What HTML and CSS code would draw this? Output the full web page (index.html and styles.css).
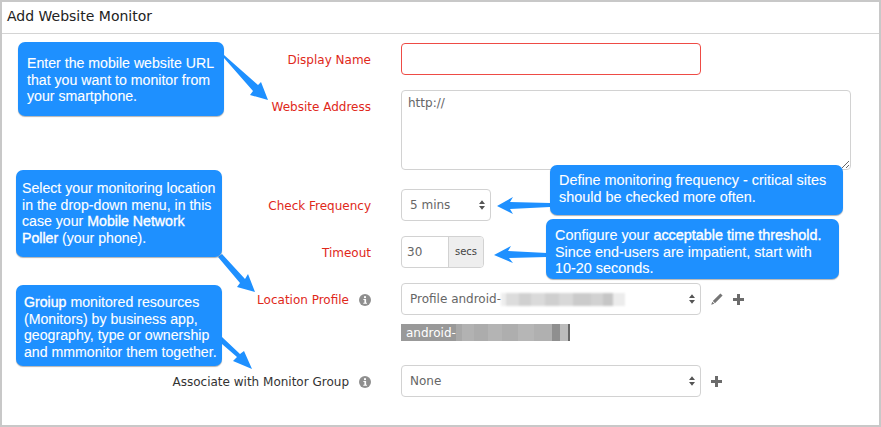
FILE: index.html
```html
<!DOCTYPE html>
<html lang="en">
<head>
<meta charset="utf-8">
<title>Add Website Monitor</title>
<link rel="stylesheet" href="styles.css">
</head>
<body>
<main class="panel">
  <header class="panel-head">Add Website Monitor</header>
  <form class="form">
    <div class="row row-name">
      <label class="label req">Display Name</label>
      <div class="field"><input class="control invalid w300" type="text"></div>
    </div>
    <div class="row row-address">
      <label class="label req">Website Address</label>
      <div class="field"><textarea class="control area">http://</textarea></div>
    </div>
    <div class="row row-freq">
      <label class="label req">Check Frequency</label>
      <div class="field">
        <div class="select w90">5 mins
          <svg class="sort" viewBox="0 0 7 11"><path d="M3.5 0 7 4.4H0zM3.5 11 0 6.6h7z"/></svg>
        </div>
      </div>
    </div>
    <div class="row row-time">
      <label class="label req">Timeout</label>
      <div class="field">
        <div class="group"><span class="group-value">30</span><span class="group-addon">secs</span></div>
      </div>
    </div>
    <div class="row row-profile">
      <label class="label req">Location Profile
        <svg class="info" viewBox="0 0 12 12"><circle cx="6" cy="6" r="6"/><rect class="info-i" x="5" y="2.2" width="2" height="1.9"/><path class="info-i" d="M4.4 5h2.7v3.7H8v1.1H4.3V8.7h1.1V6.1h-1z"/></svg>
      </label>
      <div class="field">
        <div class="select w300">Profile android-<span class="blur blur-light"></span>
          <svg class="sort" viewBox="0 0 7 11"><path d="M3.5 0 7 4.4H0zM3.5 11 0 6.6h7z"/></svg>
        </div>
        <svg class="pencil" viewBox="0 0 12 12"><path d="M9.4 0.4 11.6 2.6 4 10.2 1.8 8zM1.3 8.7 3.3 10.7 0.2 11.8z"/></svg>
        <svg class="plus" viewBox="0 0 11 11"><path d="M4 0h3v4h4v3H7v4H4V7H0V4h4z"/></svg>
      </div>
    </div>
    <div class="row row-tag">
      <span></span>
      <div class="field"><span class="tag">android-<span class="blur blur-dark"></span></span></div>
    </div>
    <div class="row row-group">
      <label class="label">Associate with Monitor Group
        <svg class="info" viewBox="0 0 12 12"><circle cx="6" cy="6" r="6"/><rect class="info-i" x="5" y="2.2" width="2" height="1.9"/><path class="info-i" d="M4.4 5h2.7v3.7H8v1.1H4.3V8.7h1.1V6.1h-1z"/></svg>
      </label>
      <div class="field">
        <div class="select w300">None
          <svg class="sort" viewBox="0 0 7 11"><path d="M3.5 0 7 4.4H0zM3.5 11 0 6.6h7z"/></svg>
        </div>
        <svg class="plus plus-near" viewBox="0 0 11 11"><path d="M4 0h3v4h4v3H7v4H4V7H0V4h4z"/></svg>
      </div>
    </div>
  </form>

  <svg class="arrows" viewBox="0 0 881 427">
    <path d="M224 55 258 85 261 82 268 100 250 95 253 91 224 58z"/>
    <path d="M218 257 222 254 245 279 248 274 255 292 237 287 240 283z"/>
    <path d="M222 337 240 354 244 351 252 369 233 361 237 357 222 344z"/>
    <path d="M550 203 510 202 513 197 497 206 513 214 510 209 550 207z"/>
    <path d="M547 253 508 251 511 246 494 255 513 263 509 258 547 257z"/>
  </svg>

  <p class="note note-url">Enter the mobile website URL<br>that you want to monitor from<br>your smartphone.</p>
  <p class="note note-location">Select your monitoring location<br>in the drop-down menu, in this<br>case your <b>Mobile Network<br>Poller</b> (your phone).</p>
  <p class="note note-group"><b>Groiup</b> monitored resources<br>(Monitors) by business app,<br>geography, type or ownership<br>and mmmonitor them together.</p>
  <p class="note note-freq">Define monitoring frequency - critical sites<br>should be checked more often.</p>
  <p class="note note-time">Configure your <b>acceptable time threshold.</b><br>Since end-users are impatient, start with<br>10-20 seconds.</p>
</main>
</body>
</html>
```
FILE: styles.css
```css
* { box-sizing: border-box; }
html, body { margin: 0; background: #fff; }
.panel {
  position: relative;
  width: 881px;
  height: 427px;
  border: 2px solid #c8c8c8;
  font-family: "DejaVu Sans", sans-serif;
  overflow: hidden;
}
.panel-head {
  height: 32px;
  padding: 5px 0 0 5px;
  font-size: 14px;
  line-height: 18px;
  color: #222;
  border-bottom: 1px solid #d4d4d4;
}
.form { padding-top: 9px; }
.row {
  display: grid;
  grid-template-columns: 369px 1fr;
  column-gap: 30px;
  align-items: start;
}
.row-address { margin-top: 15px; }
.row-freq { margin-top: 19px; }
.row-time { margin-top: 15px; }
.row-profile { margin-top: 15px; }
.row-tag { margin-top: 9px; }
.row-group { margin-top: 24px; }
.label {
  display: flex;
  justify-content: flex-end;
  align-items: center;
  gap: 10px;
  height: 32px;
  padding-top: 2px;
  font-size: 12px;
  color: #333;
}
.label.req { color: #e0281a; }
.info { width: 12px; height: 12px; fill: #8f8f8f; flex: none; }
.info-i { fill: #fff; }
.field { display: flex; align-items: center; }
.control {
  display: block;
  height: 32px;
  border: 1px solid #d2d2d2;
  border-radius: 4px;
  background: #fff;
  font: 12px "DejaVu Sans", sans-serif;
  color: #666;
  outline: none;
}
.invalid { border-color: #ee4b45; }
.w300 { width: 300px; }
.w90 { width: 90px; }
.area {
  width: 450px;
  height: 80px;
  padding: 3px 6px;
  line-height: 18px;
  resize: vertical;
}
.select {
  position: relative;
  height: 32px;
  line-height: 30px;
  padding-left: 8px;
  border: 1px solid #d2d2d2;
  border-radius: 4px;
  font-size: 12px;
  color: #666;
  background: #fff;
  white-space: nowrap;
}
.sort {
  position: absolute;
  right: 5px;
  top: 10px;
  width: 6px;
  height: 10px;
  fill: #555;
}
.group {
  display: flex;
  width: 83px;
  height: 32px;
  border: 1px solid #d2d2d2;
  border-radius: 4px;
  overflow: hidden;
  font-size: 12px;
  line-height: 30px;
  color: #666;
}
.group-value { width: 46px; padding-left: 5px; }
.group-addon {
  flex: 1;
  border-left: 1px solid #d2d2d2;
  background: #eee;
  color: #444;
  font-size: 10px;
  text-align: center;
}
.blur {
  display: inline-block;
  vertical-align: middle;
  filter: blur(1px);
}
.blur-light {
  width: 124px;
  height: 13px;
  background: linear-gradient(90deg,
    #eee 0 5px, #dcdcdc 5px 18px, #d0d0d0 18px 30px, #dadada 30px 44px, #cfcfcf 44px 58px,
    #d8d8d8 58px 72px, #cbcbcb 72px 90px, #d2d2d2 90px 102px, #c6c6c6 102px 112px, #ececec 112px);
}
.pencil { width: 12px; height: 12px; margin-left: 10px; fill: #757575; }
.plus { width: 11px; height: 11px; margin-left: 10px; fill: #6b6b6b; }
.plus-near { margin-left: 10px; }
.tag {
  display: flex;
  align-items: center;
  width: 169px;
  height: 17px;
  padding-left: 5px;
  background: #999;
  color: #fff;
  font-size: 12px;
  overflow: hidden;
}
.blur-dark {
  width: 118px;
  height: 17px;
  filter: none;
  background: linear-gradient(90deg,
    #a8a8a8 0 6px, #b2b2b2 6px 18px, #acacac 18px 32px, #b4b4b4 32px 46px, #aeaeae 46px 62px,
    #b6b6b6 62px 78px, #b0b0b0 78px 96px, #8f8f8f 96px 104px, #bbb 104px 112px, #666 112px 114px, #d4d4d4 114px);
}
.arrows {
  position: absolute;
  left: -2px;
  top: -2px;
  width: 881px;
  height: 427px;
  fill: #1e90ff;
  pointer-events: none;
}
.note {
  position: absolute;
  margin: 0;
  background: #1e90ff;
  color: #fff;
  border-radius: 7px;
  font: 14.15px/16.5px "Liberation Sans", sans-serif;
  -webkit-text-stroke: .1px #fff;
  white-space: nowrap;
  box-shadow: 0 1px 1px rgba(0,0,0,.3);
}
.note b { font-weight: 400; -webkit-text-stroke: .35px #fff; }
.note-url { left: 16px; top: 40px; width: 206px; height: 74px; padding: 13px 0 0 9px; }
.note-location { left: 14px; top: 168px; width: 206px; height: 87px; padding: 10px 0 0 6px; }
.note-group { left: 14px; top: 283px; width: 206px; height: 81px; padding: 9px 0 0 8px; }
.note-freq { left: 548px; top: 163px; width: 293px; height: 50px; padding: 7px 0 0 9px; font-size: 14.4px; }
.note-time { left: 544px; top: 217px; width: 293px; height: 60px; padding: 8px 0 0 9px; font-size: 14.4px; }
```
